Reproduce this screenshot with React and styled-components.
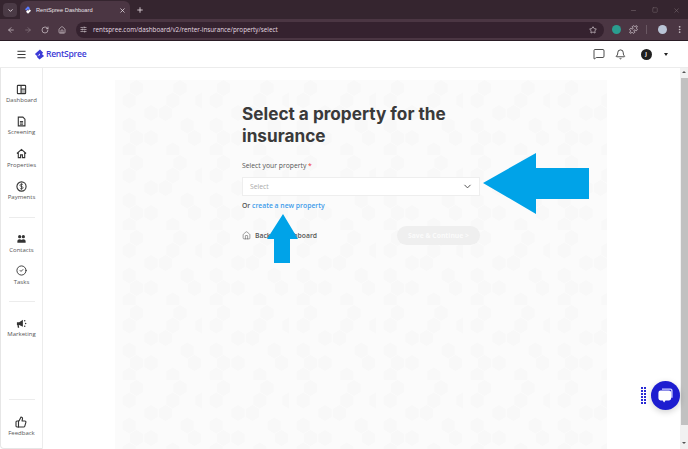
import React from "react";
import styled, { createGlobalStyle } from "styled-components";
import {
  ArrowLeft,
  ArrowRight,
  RotateCw,
  Home,
  Star,
  Puzzle,
  MoreVertical,
  ChevronDown,
  Minus,
  Square,
  X,
  Plus,
  SlidersHorizontal,
  MessageSquare,
  Bell,
  Menu,
  CircleCheck,
  ThumbsUp,
} from "lucide-react";

// faint honeycomb behind the form, some cells are left out on purpose
const hexCell = (col, row) => {
  const x = col * 14.5 + (row % 2 ? 7.25 : 0);
  const y = row * 12.5;
  const pts = [
    [x + 7, y],
    [x + 13.5, y + 4],
    [x + 13.5, y + 12],
    [x + 7, y + 16],
    [x + 0.5, y + 12],
    [x + 0.5, y + 4],
  ];
  return `<polygon points='${pts.map((p) => p.join(",")).join(" ")}'/>`;
};
const honeycombCells = [
  [1, 0], [4, 0], [0, 1], [3, 1], [5, 1], [2, 2], [3, 2], [0, 3], [4, 3],
  [1, 4], [2, 4], [5, 4], [3, 5], [0, 5],
];
const honeycomb = encodeURIComponent(
  `<svg xmlns='http://www.w3.org/2000/svg' width='87' height='75'><g fill='#f8f8f8'>${honeycombCells
    .map(([c, r]) => hexCell(c, r))
    .join("")}</g></svg>`
);

const GlobalStyle = createGlobalStyle`
  html, body {
    margin: 0;
    padding: 0;
    height: 100%;
    overflow: hidden;
    font-family: "Open Sans", "Liberation Sans", sans-serif;
  }
  #root { height: 100%; }
  * { box-sizing: border-box; }
`;

const Page = styled.div`
  position: relative;
  width: 688px;
  height: 449px;
  display: flex;
  flex-direction: column;
  overflow: hidden;
  background: #fff;
`;

const TabStrip = styled.div`
  height: 19px;
  flex: none;
  padding: 1px 0 0 3px;
  display: flex;
  align-items: center;
  background: #35252f;
  color: #e8dfe5;
`;

const TabMenu = styled.div`
  width: 14px;
  height: 14px;
  border-radius: 4px;
  background: #4a3a45;
  display: flex;
  align-items: center;
  justify-content: center;
`;

const Tab = styled.div`
  width: 110px;
  height: 18px;
  margin-left: 3px;
  padding: 0 4px;
  border-radius: 6px 6px 0 0;
  background: #4b3643;
  display: flex;
  align-items: center;
  font-family: "Liberation Sans", sans-serif;
  font-size: 5.7px;
  color: #e9e1e6;
`;

const TabTitle = styled.span`
  flex: 1;
  margin-left: 4px;
`;

const NewTab = styled.div`
  margin-left: 6px;
  display: flex;
`;

const WindowControls = styled.div`
  margin-left: auto;
  padding-right: 8px;
  display: flex;
  gap: 15px;
  color: #77686f;
`;

const Toolbar = styled.div`
  height: 22px;
  flex: none;
  padding: 0 0 0 7px;
  display: flex;
  align-items: center;
  background: #4b3643;
  color: #d9cfd5;
  border-bottom: 1px solid #2a1c25;
`;

const NavIcons = styled.div`
  display: flex;
  gap: 9px;
  width: 69px;
`;

const Omnibox = styled.div`
  width: 528px;
  height: 16px;
  padding: 0 7px 0 4px;
  border-radius: 8px;
  background: #35222f;
  display: flex;
  align-items: center;
  font-size: 6.3px;
  color: #e3dae0;
`;

const Url = styled.span`
  flex: 1;
  margin-left: 6px;
`;

const Extensions = styled.div`
  margin-left: 8px;
  display: flex;
  align-items: center;
  gap: 8px;
`;

const ToolbarRule = styled.span`
  width: 1px;
  height: 9px;
  margin: 0 3px 0 0;
  background: #6a5863;
`;

const Dot = styled.span`
  width: 9px;
  height: 9px;
  border-radius: 50%;
  background: ${(p) => p.$color};
`;

const AppBar = styled.header`
  height: 27px;
  flex: none;
  padding: 0 20px 0 16px;
  display: flex;
  align-items: center;
  color: #222;
  border-bottom: 1px solid #ececec;
`;

const Logo = styled.div`
  margin-left: 7px;
  display: flex;
  align-items: center;
  gap: 1px;
  font-size: 8.6px;
  font-weight: 600;
  letter-spacing: -0.3px;
  color: #3c3ad6;
`;

const BarActions = styled.div`
  margin-left: auto;
  display: flex;
  align-items: center;
`;

const BellWrap = styled.div`
  margin-left: 10.5px;
  display: flex;
`;

const Avatar = styled.div`
  width: 11px;
  height: 11px;
  margin: 0 12.5px 0 14.5px;
  border-radius: 50%;
  background: #1f1f1f;
  color: #fff;
  font-size: 5px;
  font-weight: 700;
  display: flex;
  align-items: center;
  justify-content: center;
`;

const Caret = styled.div`
  width: 0;
  height: 0;
  border-left: 2.5px solid transparent;
  border-right: 2.5px solid transparent;
  border-top: 3px solid #222;
`;

const Body = styled.div`
  flex: 1;
  min-height: 0;
  display: flex;
`;

const Sidebar = styled.nav`
  width: 43px;
  flex: none;
  padding-top: 15.5px;
  border-right: 1px solid #ececec;
  border-left: 1px solid #e6e6e6;
  border-bottom: 1px solid #e6e6e6;
  border-bottom-left-radius: 4px;
  display: flex;
  flex-direction: column;
  align-items: center;
`;

const NavItem = styled.div`
  height: 32.4px;
  flex: none;
  display: flex;
  flex-direction: column;
  align-items: center;
  color: #333;
  font-size: 6px;
  line-height: 8px;
`;

const NavLabel = styled.span`
  margin-top: 1.5px;
  color: #555;
`;

const NavRule = styled.div`
  width: 26px;
  height: 1px;
  flex: none;
  margin: ${(p) => p.$margin};
  background: #ececec;
`;

const Main = styled.main`
  flex: 1;
  min-width: 0;
  display: flex;
`;

const Panel = styled.section`
  width: 492px;
  margin: 12px 0 0 72px;
  padding: 23px 0 0 127px;
  background: #fbfbfb url("data:image/svg+xml,${honeycomb}");
`;

const Form = styled.div`
  width: 238px;
`;

const Heading = styled.h1`
  margin: 0;
  font-family: Inter, "Liberation Sans", sans-serif;
  font-size: 17.2px;
  line-height: 21.5px;
  font-weight: 700;
  color: #3a3a3a;
`;

const FieldLabel = styled.div`
  margin-top: 15px;
  font-size: 6.8px;
  line-height: 10px;
  color: #555;
`;

const Required = styled.span`
  color: #e33;
`;

const SelectBox = styled.div`
  height: 19px;
  margin-top: 6px;
  padding: 0 6px 0 7px;
  display: flex;
  align-items: center;
  justify-content: space-between;
  border: 1px solid #eee;
  background: #fff;
  font-size: 6.8px;
  color: #aaa;
`;

const CreateLine = styled.div`
  margin-top: 5px;
  font-size: 6.8px;
  line-height: 10px;
  font-weight: 600;
  color: #555;
`;

const CreateLink = styled.a`
  color: #3d9bea;
`;

const Actions = styled.div`
  margin-top: 15px;
  display: flex;
  align-items: center;
  justify-content: space-between;
`;

const BackLink = styled.div`
  display: flex;
  align-items: center;
  gap: 4px;
  font-size: 6.8px;
  font-weight: 600;
  color: #555;
`;

const SaveButton = styled.div`
  width: 83px;
  height: 19px;
  border-radius: 10px;
  background: #efefef;
  color: #fbfbfb;
  font-size: 6.8px;
  font-weight: 700;
  display: flex;
  align-items: center;
  justify-content: center;
`;

const Scrollbar = styled.div`
  width: 8px;
  flex: none;
  margin-left: auto;
  background: #f1f1f1;
  display: flex;
  flex-direction: column;
  align-items: center;
`;

const ScrollThumb = styled.div`
  width: 7px;
  height: 347px;
  margin-top: 5px;
  background: #c1c1c1;
`;

const ScrollArrow = styled.div`
  width: 0;
  height: 0;
  margin-top: ${(p) => (p.$down ? "17px" : "3px")};
  border-left: 2px solid transparent;
  border-right: 2px solid transparent;
  ${(p) => (p.$down ? "border-top: 2px solid #555;" : "border-bottom: 2px solid #555;")}
`;

const ChatButton = styled.div`
  position: absolute;
  left: 651px;
  top: 381px;
  width: 29px;
  height: 29px;
  border-radius: 50%;
  background: #1d1dd0;
  box-shadow: 0 2px 6px rgba(0, 0, 0, 0.18);
  display: flex;
  align-items: center;
  justify-content: center;
`;

const ChatHandle = styled.div`
  position: absolute;
  left: 641px;
  top: 387px;
  width: 5px;
  display: grid;
  grid-template-columns: 2px 2px;
  grid-auto-rows: 2px;
  gap: 1px;
`;

const HandleDot = styled.span`
  background: #2a2ad4;
`;

const Overlay = styled.svg`
  position: absolute;
  left: ${(p) => p.$left}px;
  top: ${(p) => p.$top}px;
`;

const Glyph = ({ children }) => (
  <svg width="11" height="11" viewBox="0 0 24 24" fill="none" stroke="currentColor" strokeWidth="2.4">
    {children}
  </svg>
);

const DashboardIcon = () => (
  <Glyph>
    <rect x="3" y="3" width="18" height="18" rx="1.5" />
    <path d="M11 3v18M11 11h10" />
    <rect x="11" y="11" width="10" height="10" fill="currentColor" stroke="none" opacity="0.35" />
  </Glyph>
);

const ScreeningIcon = () => (
  <Glyph>
    <path d="M5 2.5h10l4.5 4.5v14.5H5z" />
    <path d="M8.5 12h7M8.5 15h7M8.5 18h7" strokeWidth="2" />
  </Glyph>
);

const PropertiesIcon = () => (
  <Glyph>
    <path d="M2 12L12 3l10 9M5 10v11h5v-6h4v6h5V10" />
  </Glyph>
);

const PaymentsIcon = () => (
  <Glyph>
    <circle cx="12" cy="12" r="10" />
    <path
      d="M15.5 8.5c-.6-1.1-1.9-1.7-3.5-1.7-2 0-3.5 1-3.5 2.6 0 3.6 7 1.6 7 5.2 0 1.6-1.5 2.6-3.5 2.6-1.6 0-2.9-.6-3.5-1.7M12 5v14"
      strokeWidth="1.8"
    />
  </Glyph>
);

const ContactsIcon = () => (
  <svg width="11" height="11" viewBox="0 0 24 24" fill="currentColor">
    <circle cx="8" cy="8" r="3.5" />
    <circle cx="16" cy="8" r="3.5" />
    <path d="M3 21v-3c0-2.5 2-4.5 5-4.5 1.6 0 3 .6 4 1.6 1-1 2.4-1.6 4-1.6 3 0 5 2 5 4.5v3z" />
  </svg>
);

const MarketingIcon = () => (
  <svg width="11" height="11" viewBox="0 0 24 24" fill="currentColor">
    <path d="M2 9h5l8-5v15l-8-4H6l1 6H4l-1-6H2z" />
    <circle cx="19" cy="6" r="1.6" />
    <circle cx="21" cy="12" r="1.6" />
    <circle cx="19" cy="18" r="1.6" />
  </svg>
);

const TasksIcon = () => <CircleCheck size={11} strokeWidth={2} />;
const FeedbackIcon = () => <ThumbsUp size={12} strokeWidth={2.2} />;

const navTop = [
  ["Dashboard", DashboardIcon],
  ["Screening", ScreeningIcon],
  ["Properties", PropertiesIcon],
  ["Payments", PaymentsIcon],
];

const NavEntry = ({ label, Icon }) => (
  <NavItem>
    <Icon />
    <NavLabel>{label}</NavLabel>
  </NavItem>
);

export default function App() {
  return (
    <Page>
      <GlobalStyle />
      <TabStrip>
        <TabMenu>
          <ChevronDown size={7} strokeWidth={3} />
        </TabMenu>
        <Tab>
          <svg width="8" height="8" viewBox="0 0 24 24">
            <path d="M12 1l6 6-6 6V9l-5 5-4-4z" fill="#5b7cff" />
            <path d="M12 23l-6-6 6-6v4l5-5 4 4z" fill="#fff" />
          </svg>
          <TabTitle>RentSpree Dashboard</TabTitle>
          <X size={7} strokeWidth={2.5} />
        </Tab>
        <NewTab>
          <Plus size={8} strokeWidth={2.5} />
        </NewTab>
        <WindowControls>
          <Minus size={7} />
          <Square size={6} />
          <X size={7} />
        </WindowControls>
      </TabStrip>
      <Toolbar>
        <NavIcons>
          <ArrowLeft size={8} />
          <ArrowRight size={8} color="#8d7d87" />
          <RotateCw size={8} />
          <Home size={8} />
        </NavIcons>
        <Omnibox>
          <SlidersHorizontal size={7} />
          <Url>rentspree.com/dashboard/v2/renter-insurance/property/select</Url>
          <Star size={8} />
        </Omnibox>
        <Extensions>
          <Dot $color="#2a9d8f" />
          <Puzzle size={9} />
          <ToolbarRule />
          <Dot $color="#b9c4d6" />
          <MoreVertical size={9} />
        </Extensions>
      </Toolbar>
      <AppBar>
        <Menu size={11} />
        <Logo>
          <svg width="11" height="11" viewBox="0 0 24 24">
            <path d="M13 1l7 7-7 7v-5l-6 6-5-5z" fill="#3c3ad6" />
            <path d="M12 23l-6-6 4-4v3l6-6 6 5-10 8z" fill="#3c3ad6" />
          </svg>
          RentSpree
        </Logo>
        <BarActions>
          <MessageSquare size={12} strokeWidth={1.6} />
          <BellWrap>
            <Bell size={11} strokeWidth={1.8} />
          </BellWrap>
          <Avatar>J</Avatar>
          <Caret />
        </BarActions>
      </AppBar>
      <Body>
        <Sidebar>
          {navTop.map(([label, Icon]) => (
            <NavEntry key={label} label={label} Icon={Icon} />
          ))}
          <NavRule $margin="3.5px 0 15.5px" />
          <NavEntry label="Contacts" Icon={ContactsIcon} />
          <NavEntry label="Tasks" Icon={TasksIcon} />
          <NavRule $margin="3.5px 0 15.5px" />
          <NavEntry label="Marketing" Icon={MarketingIcon} />
          <NavRule $margin="auto 0 15.5px" />
          <NavEntry label="Feedback" Icon={FeedbackIcon} />
        </Sidebar>
        <Main>
          <Panel>
            <Form>
              <Heading>Select a property for the insurance</Heading>
              <FieldLabel>
                Select your property <Required>*</Required>
              </FieldLabel>
              <SelectBox>
                Select
                <ChevronDown size={11} color="#444" />
              </SelectBox>
              <CreateLine>
                Or <CreateLink>create a new property</CreateLink>
              </CreateLine>
              <Actions>
                <BackLink>
                  <Home size={9} strokeWidth={1.5} />
                  Back to Dashboard
                </BackLink>
                <SaveButton>Save &amp; Continue &gt;</SaveButton>
              </Actions>
            </Form>
          </Panel>
          <Scrollbar>
            <ScrollArrow />
            <ScrollThumb />
            <ScrollArrow $down />
          </Scrollbar>
        </Main>
      </Body>
      <Overlay $left={483} $top={153} width="107" height="62" viewBox="0 0 107 62">
        <polygon points="0,30 53,0 53,15 106,15 106,46 53,46 53,61" fill="#00a3e8" />
      </Overlay>
      <Overlay $left={267} $top={213} width="32" height="51" viewBox="0 0 32 51">
        <polygon points="16,1 31,26 23,26 23,50 7,50 7,26 0,26" fill="#00a3e8" />
      </Overlay>
      <ChatHandle>
        {Array.from({ length: 12 }, (_, i) => (
          <HandleDot key={i} />
        ))}
      </ChatHandle>
      <ChatButton>
        <svg width="17" height="17" viewBox="0 0 24 24">
          <path d="M7 2h12a3 3 0 0 1 3 3v10h-2V5a1 1 0 0 0-1-1H7z" fill="#cfd2ff" />
          <path d="M5 5h12a3 3 0 0 1 3 3v8a3 3 0 0 1-3 3h-5l-2 3-2-3H5a3 3 0 0 1-3-3V8a3 3 0 0 1 3-3z" fill="#fff" />
        </svg>
      </ChatButton>
    </Page>
  );
}
